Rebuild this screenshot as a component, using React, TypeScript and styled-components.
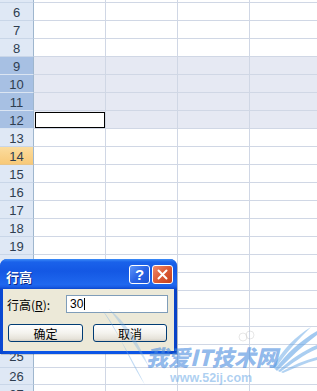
import React from 'react';
import styled, { createGlobalStyle, css } from 'styled-components';

const GlobalStyle = createGlobalStyle`
  html, body { margin: 0; padding: 0; background: #fff; overflow: hidden; }
  #root { width: 317px; height: 391px; }
  * { box-sizing: border-box; }
`;

const Page = styled.div`
  position: relative;
  width: 317px;
  height: 391px;
  overflow: hidden;
  background: #fff;
  font-family: "Liberation Sans", Arial, sans-serif;
`;

const Sheet = styled.div`
  display: flex;
  flex-direction: column;
  margin-top: -15px;
`;

const Row = styled.div<{ $h: number }>`
  display: grid;
  grid-template-columns: 34px 72px 72px 72px 72px;
  height: ${p => p.$h}px;
  flex: none;
`;

type HeadState = 'normal' | 'selected' | 'hover';

const RowHeader = styled.div<{ $state: HeadState }>`
  display: flex;
  align-items: center;
  justify-content: center;
  border-right: 1px solid #9eb6ce;
  border-bottom: 1px solid #c9d6e8;
  font-size: 13px;
  color: #2e3d50;
  padding-top: 1px;
  background: #dfe8f5;
  ${p => p.$state === 'selected' && css`
    background: #a7c0e3;
    border-bottom-color: #dbe5f2;
  `}
  ${p => p.$state === 'hover' && css`
    background: linear-gradient(#fbdc9e, #f8c978);
    border-bottom-color: #e8c58a;
  `}
`;

const Cell = styled.div<{ $selected?: boolean; $active?: boolean }>`
  display: flex;
  border-right: 1px solid #d0d7e5;
  border-bottom: 1px solid #d0d7e5;
  background: ${p => (p.$selected ? '#e6e9f3' : '#fff')};
  ${p => p.$active && css`
    padding: 1px 0 0 1px;
    background: #e6e9f3;
  `}
`;

const ActiveBox = styled.div`
  flex: 1;
  border: 1px solid #000;
  background: #fff;
`;

/* ---------- Dialog ---------- */

const Dialog = styled.div`
  position: absolute;
  left: 0;
  top: 259px;
  width: 177px;
  height: 95px;
  display: flex;
  flex-direction: column;
  border-radius: 7px 7px 0 0;
  background: linear-gradient(90deg, #0a47d0, #0c55e6 10%, #0c55e6 90%, #0941c4);
  box-shadow: 1px 1px 0 rgba(0, 0, 0, 0.15);
`;

const TitleBar = styled.div`
  height: 30px;
  flex: none;
  display: flex;
  align-items: center;
  padding: 0 4px 0 6px;
  border-radius: 7px 7px 0 0;
  background: linear-gradient(180deg, #3c8cf8 0%, #1a62ea 10%, #1458e4 40%, #1f68ef 85%, #1a5ee6 92%, #0c48cf 100%);
`;

const TitleText = styled.span`
  flex: 1;
  padding-top: 4px;
  color: #fff;
  font-family: "Noto Sans CJK SC", "Liberation Sans", sans-serif;
  font-weight: 700;
  font-size: 13px;
  text-shadow: 1px 1px 0 #0a2a8a;
`;

const CaptionButtons = styled.div`
  display: flex;
  gap: 2px;
`;

const CaptionButton = styled.div<{ $kind: 'help' | 'close' }>`
  width: 21px;
  height: 19px;
  border: 1px solid #fff;
  border-radius: 3px;
  display: flex;
  align-items: center;
  justify-content: center;
  color: #fff;
  font-family: "Liberation Sans", Arial, sans-serif;
  font-weight: 700;
  font-size: 15px;
  background: ${p =>
    p.$kind === 'help'
      ? 'linear-gradient(135deg, #5d94f8 0%, #2a64e6 50%, #1d52d2 100%)'
      : 'linear-gradient(135deg, #f08a6c 0%, #dc5a36 50%, #c3401c 100%)'};
`;

const Body = styled.div`
  flex: 1;
  margin: 0 3px 3px;
  background: #ece9d8;
  display: flex;
  flex-direction: column;
  padding: 6px 0 0 4px;
`;

const FieldRow = styled.div`
  display: grid;
  grid-template-columns: 59px 102px;
  align-items: center;
  height: 18px;
`;

const Label = styled.span`
  font-family: "Noto Sans CJK SC", "Liberation Sans", sans-serif;
  font-size: 12px;
  color: #000;
  white-space: nowrap;
  u { text-decoration: underline; }
`;

const TextBox = styled.div`
  height: 18px;
  border: 1px solid #7f9db9;
  background: #fff;
  display: flex;
  align-items: center;
  padding-left: 3px;
  font-size: 12px;
  color: #000;
`;

const Caret = styled.span`
  width: 1px;
  height: 12px;
  margin-left: 1px;
  background: #000;
`;

const ButtonRow = styled.div`
  display: flex;
  gap: 10px;
  margin-top: 11px;
  padding-left: 1px;
`;

const PushButton = styled.div<{ $w: number }>`
  width: ${p => p.$w}px;
  height: 18px;
  border: 1px solid #003c74;
  border-radius: 3px;
  background: linear-gradient(180deg, #ffffff 0%, #f4f3ee 50%, #e6e3da 85%, #d6d0c5 100%);
  display: flex;
  align-items: center;
  justify-content: center;
  font-family: "Noto Sans CJK SC", "Liberation Sans", sans-serif;
  font-size: 12px;
  color: #000;
`;

/* ---------- Watermark ---------- */

const Watermark = styled.div`
  position: absolute;
  left: 95px;
  top: 305px;
  width: 222px;
  height: 86px;
  pointer-events: none;
`;

const WatermarkArt = styled.svg`
  position: absolute;
  left: 0;
  top: 0;
`;

const WatermarkText = styled.div`
  position: absolute;
  left: 51px;
  top: 40px;
  display: flex;
  flex-direction: column;
  align-items: flex-start;
`;

const Brand = styled.span`
  font-family: "Noto Sans CJK SC", sans-serif;
  font-weight: 900;
  font-size: 22px;
  line-height: 23px;
  font-style: italic;
  color: rgba(74, 140, 222, 0.62);
`;

const Url = styled.span`
  margin-left: 24px;
  margin-top: 4px;
  font-family: "Liberation Sans", Arial, sans-serif;
  font-weight: 700;
  font-size: 12.5px;
  line-height: 12px;
  color: rgba(120, 176, 232, 0.6);
`;

/* rows 5..27; labels hidden behind the dialog (20–24) and the sliver of row 5 carry no visible text */
const rows: { n: number; h: number; label: boolean }[] = [];
for (let n = 5; n <= 27; n++) {
  let h = 18;
  if (n === 25) h = 23;
  if (n === 26) h = 17;
  rows.push({ n, h, label: n !== 5 && !(n >= 20 && n <= 24) });
}

export default function App() {
  return (
    <Page>
      <GlobalStyle />
      <Sheet>
        {rows.map(r => {
          const sel = r.n >= 9 && r.n <= 12;
          const state: HeadState = sel ? 'selected' : r.n === 14 ? 'hover' : 'normal';
          return (
            <Row key={r.n} $h={r.h}>
              <RowHeader $state={state}>{r.label ? r.n : null}</RowHeader>
              {[0, 1, 2, 3].map(c =>
                r.n === 12 && c === 0 ? (
                  <Cell key={c} $active>
                    <ActiveBox />
                  </Cell>
                ) : (
                  <Cell key={c} $selected={sel} />
                )
              )}
            </Row>
          );
        })}
      </Sheet>

      <Dialog>
        <TitleBar>
          <TitleText>行高</TitleText>
          <CaptionButtons>
            <CaptionButton $kind="help">?</CaptionButton>
            <CaptionButton $kind="close">
              <svg width="11" height="11" viewBox="0 0 11 11">
                <path d="M1.5 1.5 L9.5 9.5 M9.5 1.5 L1.5 9.5" stroke="#fff" strokeWidth="2" strokeLinecap="round" />
              </svg>
            </CaptionButton>
          </CaptionButtons>
        </TitleBar>
        <Body>
          <FieldRow>
            <Label>
              行高(<u>R</u>):
            </Label>
            <TextBox>
              30
              <Caret />
            </TextBox>
          </FieldRow>
          <ButtonRow>
            <PushButton $w={75}>确定</PushButton>
            <PushButton $w={74}>取消</PushButton>
          </ButtonRow>
        </Body>
      </Dialog>

      <Watermark>
        <WatermarkArt width="222" height="86" viewBox="0 0 222 86">
          <path d="M8 6 C 22 22, 30 48, 50 80 C 38 56, 26 34, 8 6 Z" fill="rgba(120,175,230,0.45)" />
          <path d="M14 4 C 30 16, 44 38, 54 62 C 40 40, 28 22, 14 4 Z" fill="rgba(120,175,230,0.35)" />
          <path d="M180 64 C 192 48, 205 36, 222 26 L 222 30 C 208 40, 196 52, 182 66 Z" fill="rgba(100,165,230,0.6)" />
          <path d="M183 66 C 196 54, 208 46, 222 40 L 222 44 C 208 50, 198 58, 185 67 Z" fill="rgba(100,165,230,0.55)" />
          <path d="M186 67 C 198 60, 210 55, 222 52 L 222 55 C 210 58, 200 63, 188 68 Z" fill="rgba(100,165,230,0.5)" />
          <path d="M178 62 C 188 44, 200 32, 216 22 C 204 34, 192 46, 180 64 Z" fill="rgba(100,165,230,0.5)" />
          <circle cx="148" cy="32" r="4" fill="none" stroke="rgba(160,160,160,0.25)" />
          <circle cx="155" cy="30" r="4" fill="none" stroke="rgba(160,160,160,0.25)" />
        </WatermarkArt>
        <WatermarkText>
          <Brand>我爱IT技术网</Brand>
          <Url>www.52ij.com</Url>
        </WatermarkText>
      </Watermark>
    </Page>
  );
}
